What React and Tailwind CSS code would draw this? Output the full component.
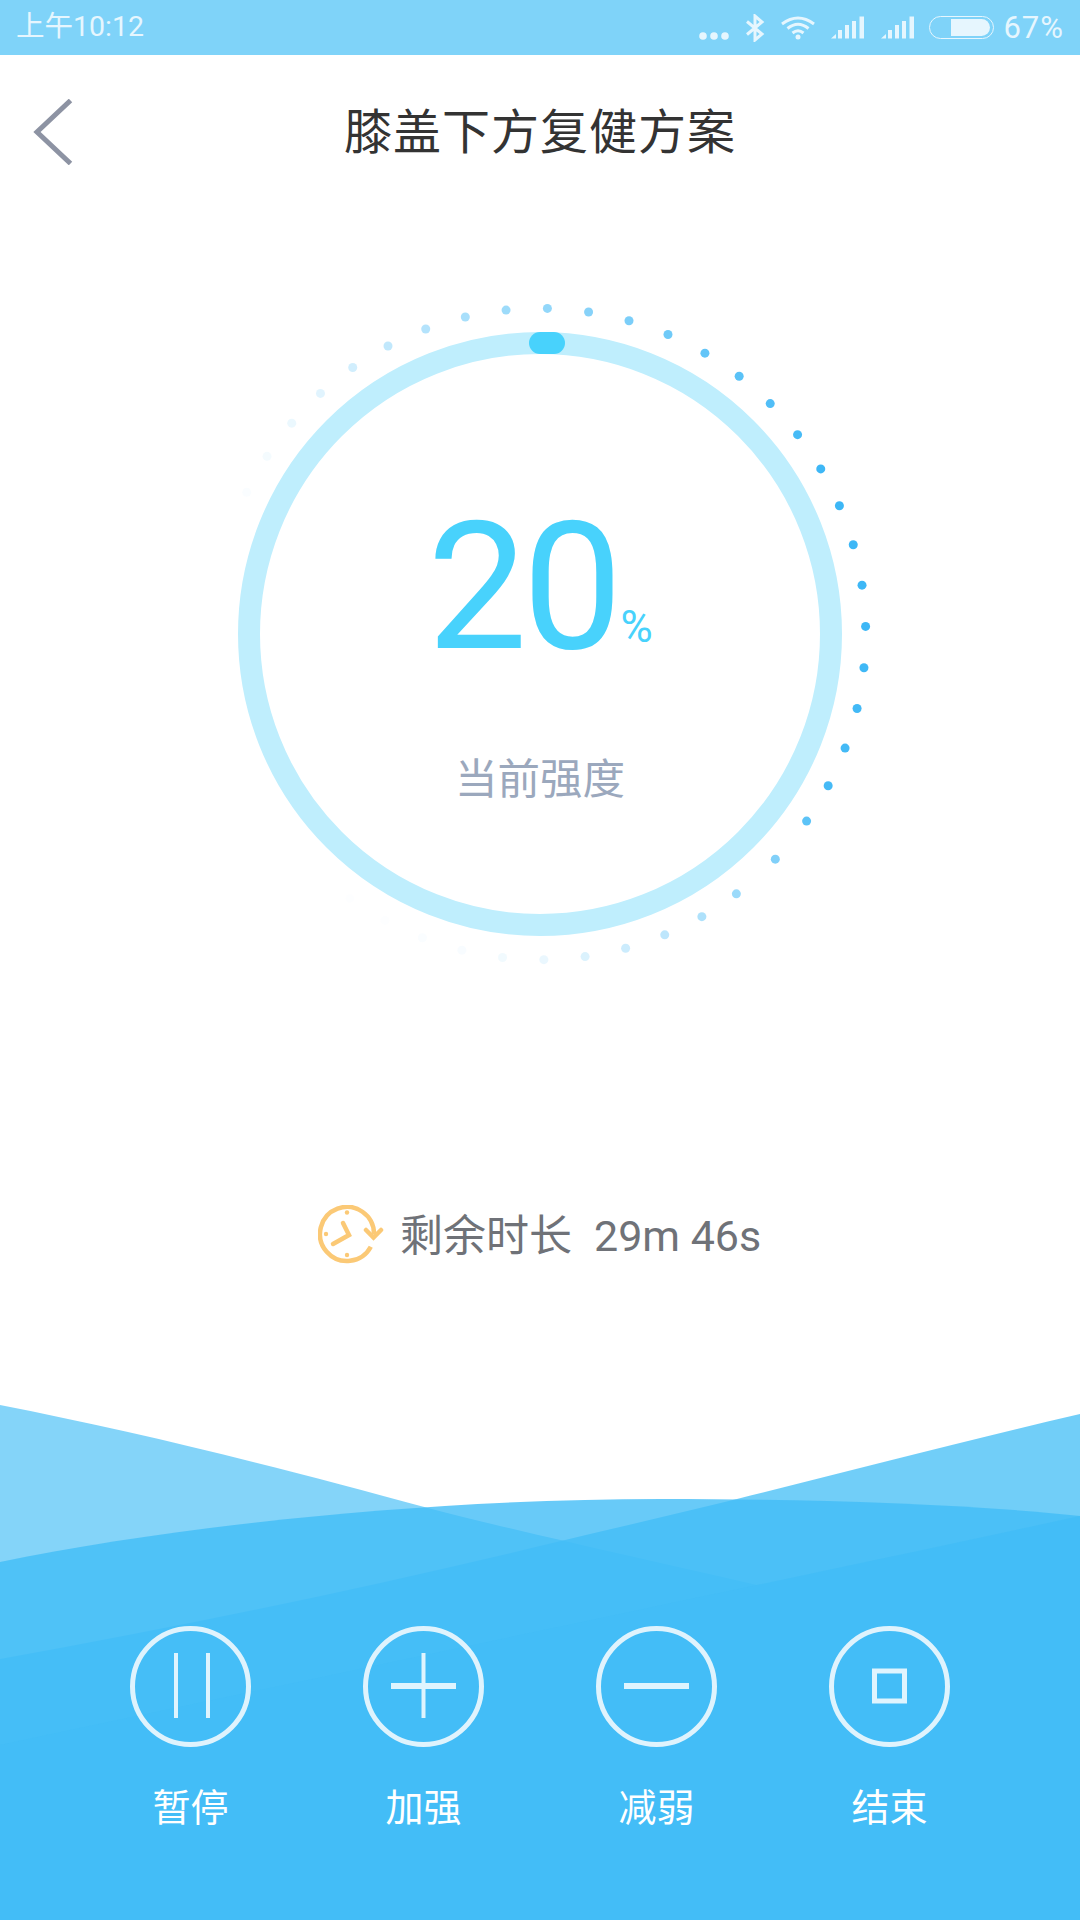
const cjk = "font-['Roboto','Noto_Sans_CJK_SC',sans-serif]";

// opacity of the dotted ring, by angle clockwise from the top
const dotStops = [
  [-72, 0], [-64, 0.03], [-57, 0.06], [-50, 0.1], [-42, 0.16], [-30, 0.3], [-15, 0.44], [0, 0.55],
  [30, 0.8], [60, 1], [90, 1], [120, 0.95], [135, 0.62], [150, 0.42], [165, 0.26], [180, 0.1],
  [195, 0.03], [210, 0.01], [225, 0],
];

function dotOpacity(angle) {
  for (let i = 1; i < dotStops.length; i++) {
    const [a0, o0] = dotStops[i - 1];
    const [a1, o1] = dotStops[i];
    if (angle >= a0 && angle <= a1) return o0 + ((o1 - o0) * (angle - a0)) / (a1 - a0);
  }
  return 0;
}

// the ring has a small seam at the lower right, where the spacing widens
function dotAngle(n) {
  const seam = n === 18 ? 1.4 : n > 18 ? 3.3 : 0;
  return 1.3 + n * 7.28 + seam;
}

const dots = Array.from({ length: 40 }, (_, i) => {
  const angle = dotAngle(i - 10);
  const rad = (angle * Math.PI) / 180;
  return {
    cx: 340 + 325.7 * Math.sin(rad),
    cy: 340 - 325.7 * Math.cos(rad),
    opacity: dotOpacity(angle),
  };
});

function SignalIcon() {
  return (
    <svg width="34" height="23" viewBox="0 0 34 23" fill="#e6f6fe">
      <path d="M0 22.500 L5 18 V22.500 Z" />
      <rect x="7" y="14" width="4" height="8.500" />
      <rect x="14" y="9" width="4" height="13.500" />
      <rect x="21" y="5" width="4" height="17.500" />
      <rect x="28.500" y="0.500" width="4.500" height="22" />
    </svg>
  );
}

function StatusBar() {
  return (
    <div className={`h-[55px] bg-[#7fd3f9] flex items-center justify-between pl-[16px] pr-[16px] text-[#e6f6fe] ${cjk}`}>
      <span className="text-[28.500px] leading-none">上午10:12</span>
      <div className="flex items-center">
        <svg width="30" height="8" viewBox="0 0 30 8" fill="#e6f6fe" className="mt-[17px]">
          <circle cx="4" cy="4" r="3.800" />
          <circle cx="15" cy="4" r="3.800" />
          <circle cx="26" cy="4" r="3.800" />
        </svg>
        <svg width="20" height="28" viewBox="0 0 20 28" fill="none" stroke="#e6f6fe" strokeWidth="3" className="ml-[16px]">
          <path d="M2 7.500 L17 20 L10 26 V2 L17 8 L2 20.500" />
        </svg>
        <svg width="34" height="24" viewBox="0 0 34 24" fill="none" stroke="#e6f6fe" strokeWidth="3" className="ml-[16px]">
          <path d="M1 8 Q17 -4 33 8" />
          <path d="M6.500 12.500 Q17 4 27.500 12.500" />
          <path d="M11.500 17 Q17 12.500 22.500 17" />
          <circle cx="17" cy="21" r="2.500" fill="#e6f6fe" stroke="none" />
        </svg>
        <div className="ml-[16px]">
          <SignalIcon />
        </div>
        <div className="ml-[16px]">
          <SignalIcon />
        </div>
        <div className="ml-[14px] w-[65px] h-[23px] rounded-full border-[1.500px] border-[#e6f6fe] flex justify-end items-center pr-[3px]">
          <div className="w-[39px] h-[17px] rounded-r-full bg-[#e6f6fe]" />
        </div>
        <span className="ml-[9px] text-[31px] leading-none tracking-[1px]">67%</span>
      </div>
    </div>
  );
}

function Header() {
  return (
    <div className="h-[152px] grid grid-cols-[1fr_auto_1fr] items-center px-[33px]">
      <svg width="40" height="66" viewBox="0 0 40 66" fill="none" stroke="#8d93a3" strokeWidth="5" className="mt-[1px]">
        <path d="M37.500 1.500 L4 33 L37.500 64.500" />
      </svg>
      <h1 className={`mt-[4px] text-[48px] leading-none text-[#333333] font-normal tracking-[1px] ${cjk}`}>
        膝盖下方复健方案
      </h1>
      <div />
    </div>
  );
}

function Dial() {
  return (
    <div className="mt-[125px] flex justify-center">
      <div className="relative w-[604px] h-[604px] rounded-full border-[22px] border-[#bfeefd] flex flex-col items-center">
        <svg width="680" height="680" viewBox="0 0 680 680" className="absolute left-[-60px] top-[-60px]">
          {dots.map((d, i) => (
            <circle key={i} cx={d.cx} cy={d.cy} r="4.500" fill="#3db7f6" opacity={d.opacity} />
          ))}
        </svg>
        <div className="absolute left-[269px] top-[-22px] w-[36px] h-[22px] rounded-full bg-[#48d2fc]" />
        <div className={`mt-[144px] flex items-baseline text-[#48d2fc] ${cjk}`}>
          <span className="text-[178px] leading-[178px] tracking-[-5px]">20</span>
          <span className="ml-[3px] -translate-y-[6px] text-[44px] leading-none">%</span>
        </div>
        <div className={`mt-[83px] text-[42.500px] leading-none text-[#9ba8bd] ${cjk}`}>当前强度</div>
      </div>
    </div>
  );
}

function ClockIcon() {
  return (
    <svg width="66" height="60" viewBox="0 0 66 60" fill="none" stroke="#fbc976" strokeWidth="4.500" className="mb-[3px]">
      <path d="M52.800 41.700 A27 27 0 1 1 56 29" />
      <path d="M48 25 L55.500 32.500 L63 25" strokeLinecap="round" />
      <path d="M25 18 L31 30 L15 39" strokeLinecap="round" />
      <circle cx="29" cy="7.500" r="2.200" fill="#fbc976" stroke="none" />
      <circle cx="8" cy="29" r="2.200" fill="#fbc976" stroke="none" />
      <circle cx="29" cy="50" r="2.200" fill="#fbc976" stroke="none" />
    </svg>
  );
}

function Remaining() {
  return (
    <div className={`mt-[270px] h-[60px] flex items-center pl-[318px] text-[43px] leading-none text-[#6f7278] ${cjk}`}>
      <ClockIcon />
      <span className="ml-[16px]">剩余时长</span>
      <span className="ml-[22px]">29m 46s</span>
    </div>
  );
}

const controls = [
  {
    label: "暂停",
    icon: (
      <>
        <rect x="44" y="27" width="4" height="65" />
        <rect x="76" y="27" width="4" height="65" />
      </>
    ),
  },
  {
    label: "加强",
    icon: (
      <>
        <rect x="58.500" y="27" width="4" height="65" />
        <rect x="28" y="57" width="65" height="6" />
      </>
    ),
  },
  {
    label: "减弱",
    icon: <rect x="28" y="57" width="65" height="6" />,
  },
  {
    label: "结束",
    icon: <path fillRule="evenodd" d="M43 42.500 H78 V77.500 H43 Z M48 47.500 V72.500 H73 V47.500 Z" />,
  },
];

function Controls() {
  return (
    <div className="relative mt-auto h-[520px]">
      <svg width="1080" height="520" viewBox="0 0 1080 520" className="absolute inset-0">
        <path d="M0 5 C138 32 275 66 428 108 C520 132 640 158 757 185 L1080 262 V520 H0 Z" fill="#42bdf6" opacity="0.65" />
        <path d="M1080 14 C960 42 850 71 737 99 C680 113 620 127 565 140 C380 185 190 225 0 259 V520 H1080 Z" fill="#42bdf6" opacity="0.75" />
        <path d="M0 162 C180 125 430 99 661 99 C800 99 960 103 1080 116 V520 H0 Z" fill="#42bdf6" opacity="0.8" />
        <path d="M1080 116 C970 140 860 163 757 185 C520 235 260 290 0 345 V520 H1080 Z" fill="#42bdf6" opacity="0.9" />
      </svg>
      <div className={`relative pt-[226px] px-[74px] grid grid-cols-4 ${cjk}`}>
        {controls.map((c) => (
          <div key={c.label} className="flex flex-col items-center">
            <div className="w-[121px] h-[121px] rounded-full border-[5px] border-[#dff3fd]">
              <svg width="111" height="111" viewBox="5 5 111 111" fill="#dff4fe">
                {c.icon}
              </svg>
            </div>
            <span className="mt-[42px] text-[38px] leading-none text-white">{c.label}</span>
          </div>
        ))}
      </div>
    </div>
  );
}

export default function App() {
  return (
    <div className="w-[1080px] h-[1920px] overflow-hidden bg-white flex flex-col">
      <StatusBar />
      <Header />
      <Dial />
      <Remaining />
      <Controls />
    </div>
  );
}
